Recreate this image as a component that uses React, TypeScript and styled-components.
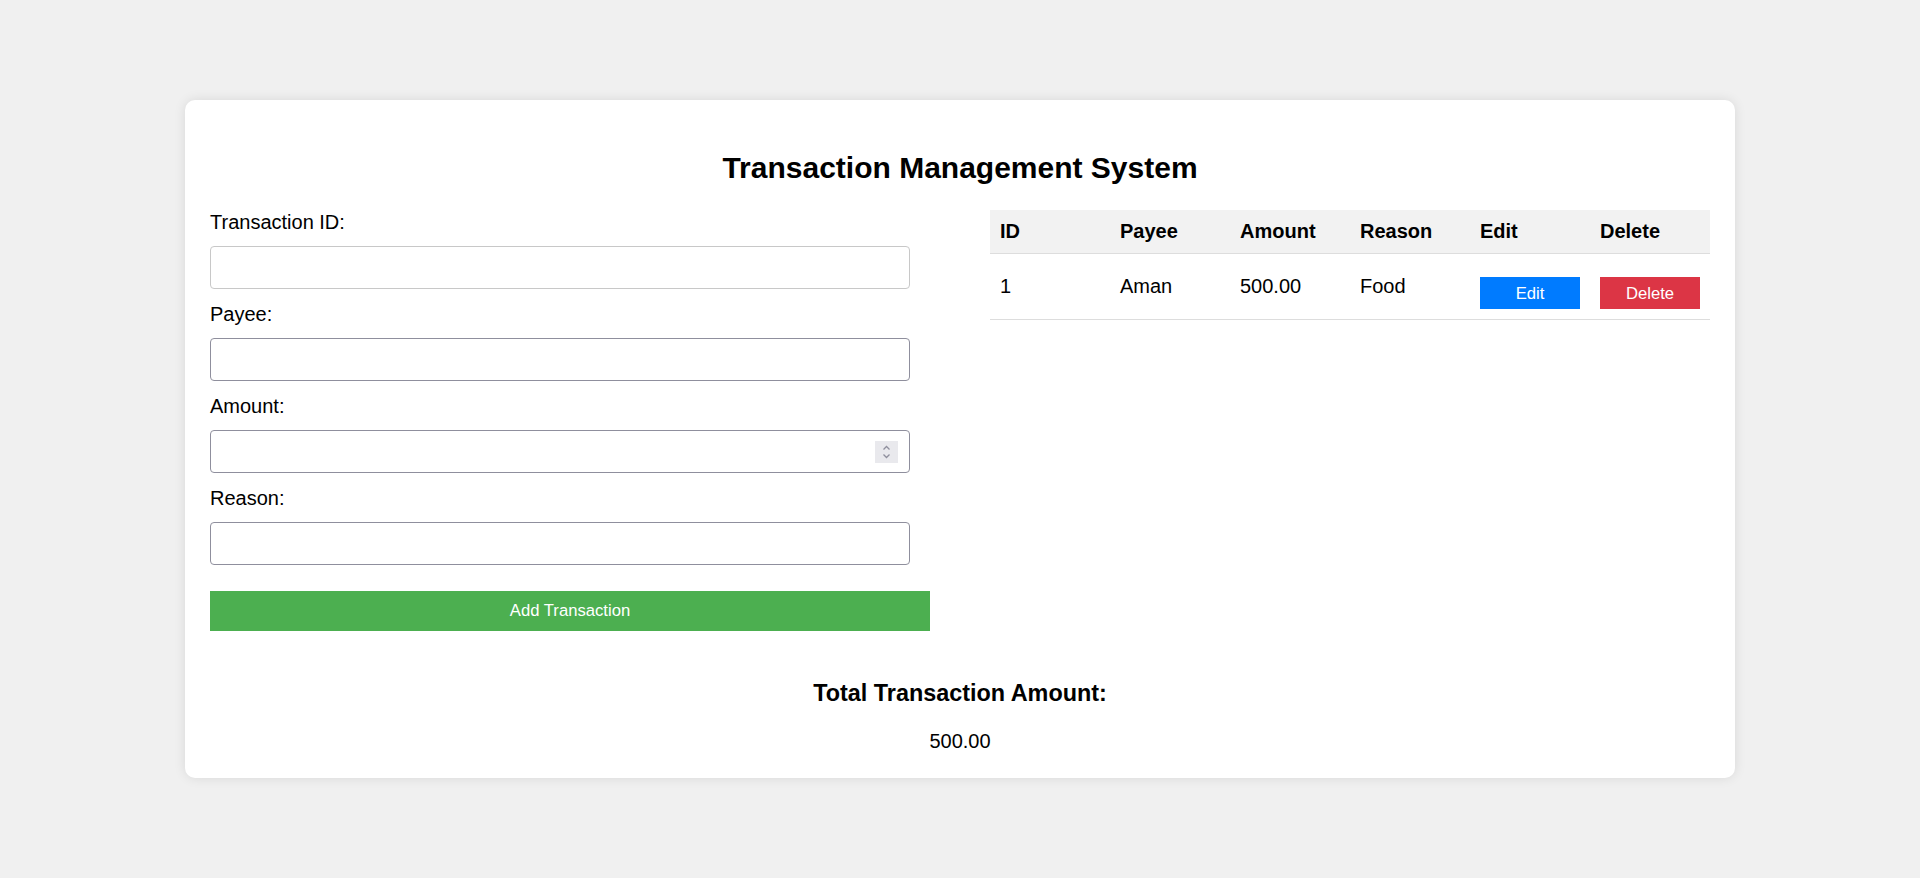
import React from "react";
import styled, { createGlobalStyle } from "styled-components";

const GlobalStyle = createGlobalStyle`
  html, body {
    margin: 0;
    padding: 0;
    background: #f0f0f0;
    font-family: "Liberation Sans", Arial, sans-serif;
    color: #000;
  }
  * { box-sizing: border-box; }
`;

const Page = styled.div`
  min-height: 100vh;
  display: flex;
  align-items: center;
  justify-content: center;
`;

const Card = styled.div`
  width: 1550px;
  background: #fff;
  border-radius: 10px;
  box-shadow: 0 0 12px rgba(0, 0, 0, 0.1);
  padding: 25px;
`;

const Title = styled.h2`
  margin: 26px 0 26px;
  font-size: 30px;
  line-height: 33.5px;
  font-weight: 700;
  text-align: center;
`;

const Columns = styled.div`
  display: flex;
  justify-content: space-between;
  align-items: flex-start;
`;

const FormCol = styled.form`
  width: 720px;
  display: flex;
  flex-direction: column;
  align-items: flex-start;
`;

const Label = styled.label`
  display: block;
  font-size: 20px;
  line-height: 23px;
  margin-bottom: 12px;
`;

const Field = styled.div`
  position: relative;
  width: 700px;
  height: 43px;
  margin-bottom: 14px;
`;

const Input = styled.input<{ $light?: boolean }>`
  width: 100%;
  height: 100%;
  border: 1px solid ${(p) => (p.$light ? "#c8c8c8" : "#8f8f9d")};
  border-radius: 4px;
  padding: 0 10px;
  font-size: 20px;
  font-family: inherit;
  background: #fff;
  outline: none;
  -moz-appearance: textfield;
  &::-webkit-outer-spin-button,
  &::-webkit-inner-spin-button {
    -webkit-appearance: none;
    margin: 0;
  }
`;

const Spinner = styled.span`
  position: absolute;
  right: 12px;
  top: 11px;
  width: 23px;
  height: 22px;
  background: #e9e9ed;
  display: flex;
  pointer-events: none;
`;

const AddButton = styled.button`
  width: 720px;
  height: 40px;
  margin-top: 12px;
  background: #4caf50;
  color: #fff;
  border: none;
  font-family: "Liberation Sans", Arial, sans-serif;
  font-size: 16.67px;
  cursor: pointer;
`;

const TableCol = styled.div`
  width: 720px;
  margin-top: -1px;
`;

const Table = styled.table`
  width: 100%;
  border-collapse: collapse;
  table-layout: fixed;
`;

const Th = styled.th`
  background: #f2f2f2;
  text-align: left;
  font-size: 20px;
  line-height: 23px;
  font-weight: 700;
  padding: 10px;
  border-bottom: 1px solid #ddd;
`;

const Td = styled.td`
  font-size: 20px;
  line-height: 23px;
  padding: 11px 10px 10px;
  vertical-align: middle;
  border-bottom: 1px solid #ddd;
`;

const ActionTd = styled.td`
  padding: 10px;
  vertical-align: top;
  border-bottom: 1px solid #ddd;
`;

const ActionButton = styled.button<{ $variant: "edit" | "delete" }>`
  display: block;
  width: 100px;
  height: 32px;
  margin-top: 13px;
  border: none;
  color: #fff;
  background: ${(p) => (p.$variant === "edit" ? "#007bff" : "#dc3545")};
  font-family: "Liberation Sans", Arial, sans-serif;
  font-size: 16.67px;
  padding: 2px 0 0;
  cursor: pointer;
`;

const Summary = styled.div`
  text-align: center;
  margin-top: 49px;
`;

const SummaryTitle = styled.h3`
  margin: 0 0 23px;
  font-size: 23.4px;
  line-height: 27px;
  font-weight: 700;
`;

const SummaryValue = styled.div`
  font-size: 20px;
  line-height: 23px;
`;

const SpinnerIcon = () => (
  <svg width="23" height="22" viewBox="0 0 23 22">
    <path d="M8.5 8.5 L11.5 5.5 L14.5 8.5" fill="none" stroke="#8f8f9d" strokeWidth="1.3" />
    <path d="M8.5 13.5 L11.5 16.5 L14.5 13.5" fill="none" stroke="#8f8f9d" strokeWidth="1.3" />
  </svg>
);

const transactions = [{ id: 1, payee: "Aman", amount: 500, reason: "Food" }];

export default function App() {
  const total = transactions.reduce((s, t) => s + t.amount, 0);
  return (
    <>
      <GlobalStyle />
      <Page>
        <Card>
          <Title>Transaction Management System</Title>
          <Columns>
            <FormCol onSubmit={(e) => e.preventDefault()}>
              <Label htmlFor="tid">Transaction ID:</Label>
              <Field>
                <Input id="tid" type="text" $light />
              </Field>
              <Label htmlFor="payee">Payee:</Label>
              <Field>
                <Input id="payee" type="text" />
              </Field>
              <Label htmlFor="amount">Amount:</Label>
              <Field>
                <Input id="amount" type="number" />
                <Spinner>
                  <SpinnerIcon />
                </Spinner>
              </Field>
              <Label htmlFor="reason">Reason:</Label>
              <Field>
                <Input id="reason" type="text" />
              </Field>
              <AddButton type="submit">Add Transaction</AddButton>
            </FormCol>
            <TableCol>
              <Table>
                <thead>
                  <tr>
                    <Th>ID</Th>
                    <Th>Payee</Th>
                    <Th>Amount</Th>
                    <Th>Reason</Th>
                    <Th>Edit</Th>
                    <Th>Delete</Th>
                  </tr>
                </thead>
                <tbody>
                  {transactions.map((t) => (
                    <tr key={t.id}>
                      <Td>{t.id}</Td>
                      <Td>{t.payee}</Td>
                      <Td>{t.amount.toFixed(2)}</Td>
                      <Td>{t.reason}</Td>
                      <ActionTd>
                        <ActionButton $variant="edit">Edit</ActionButton>
                      </ActionTd>
                      <ActionTd>
                        <ActionButton $variant="delete">Delete</ActionButton>
                      </ActionTd>
                    </tr>
                  ))}
                </tbody>
              </Table>
            </TableCol>
          </Columns>
          <Summary>
            <SummaryTitle>Total Transaction Amount:</SummaryTitle>
            <SummaryValue>{total.toFixed(2)}</SummaryValue>
          </Summary>
        </Card>
      </Page>
    </>
  );
}
